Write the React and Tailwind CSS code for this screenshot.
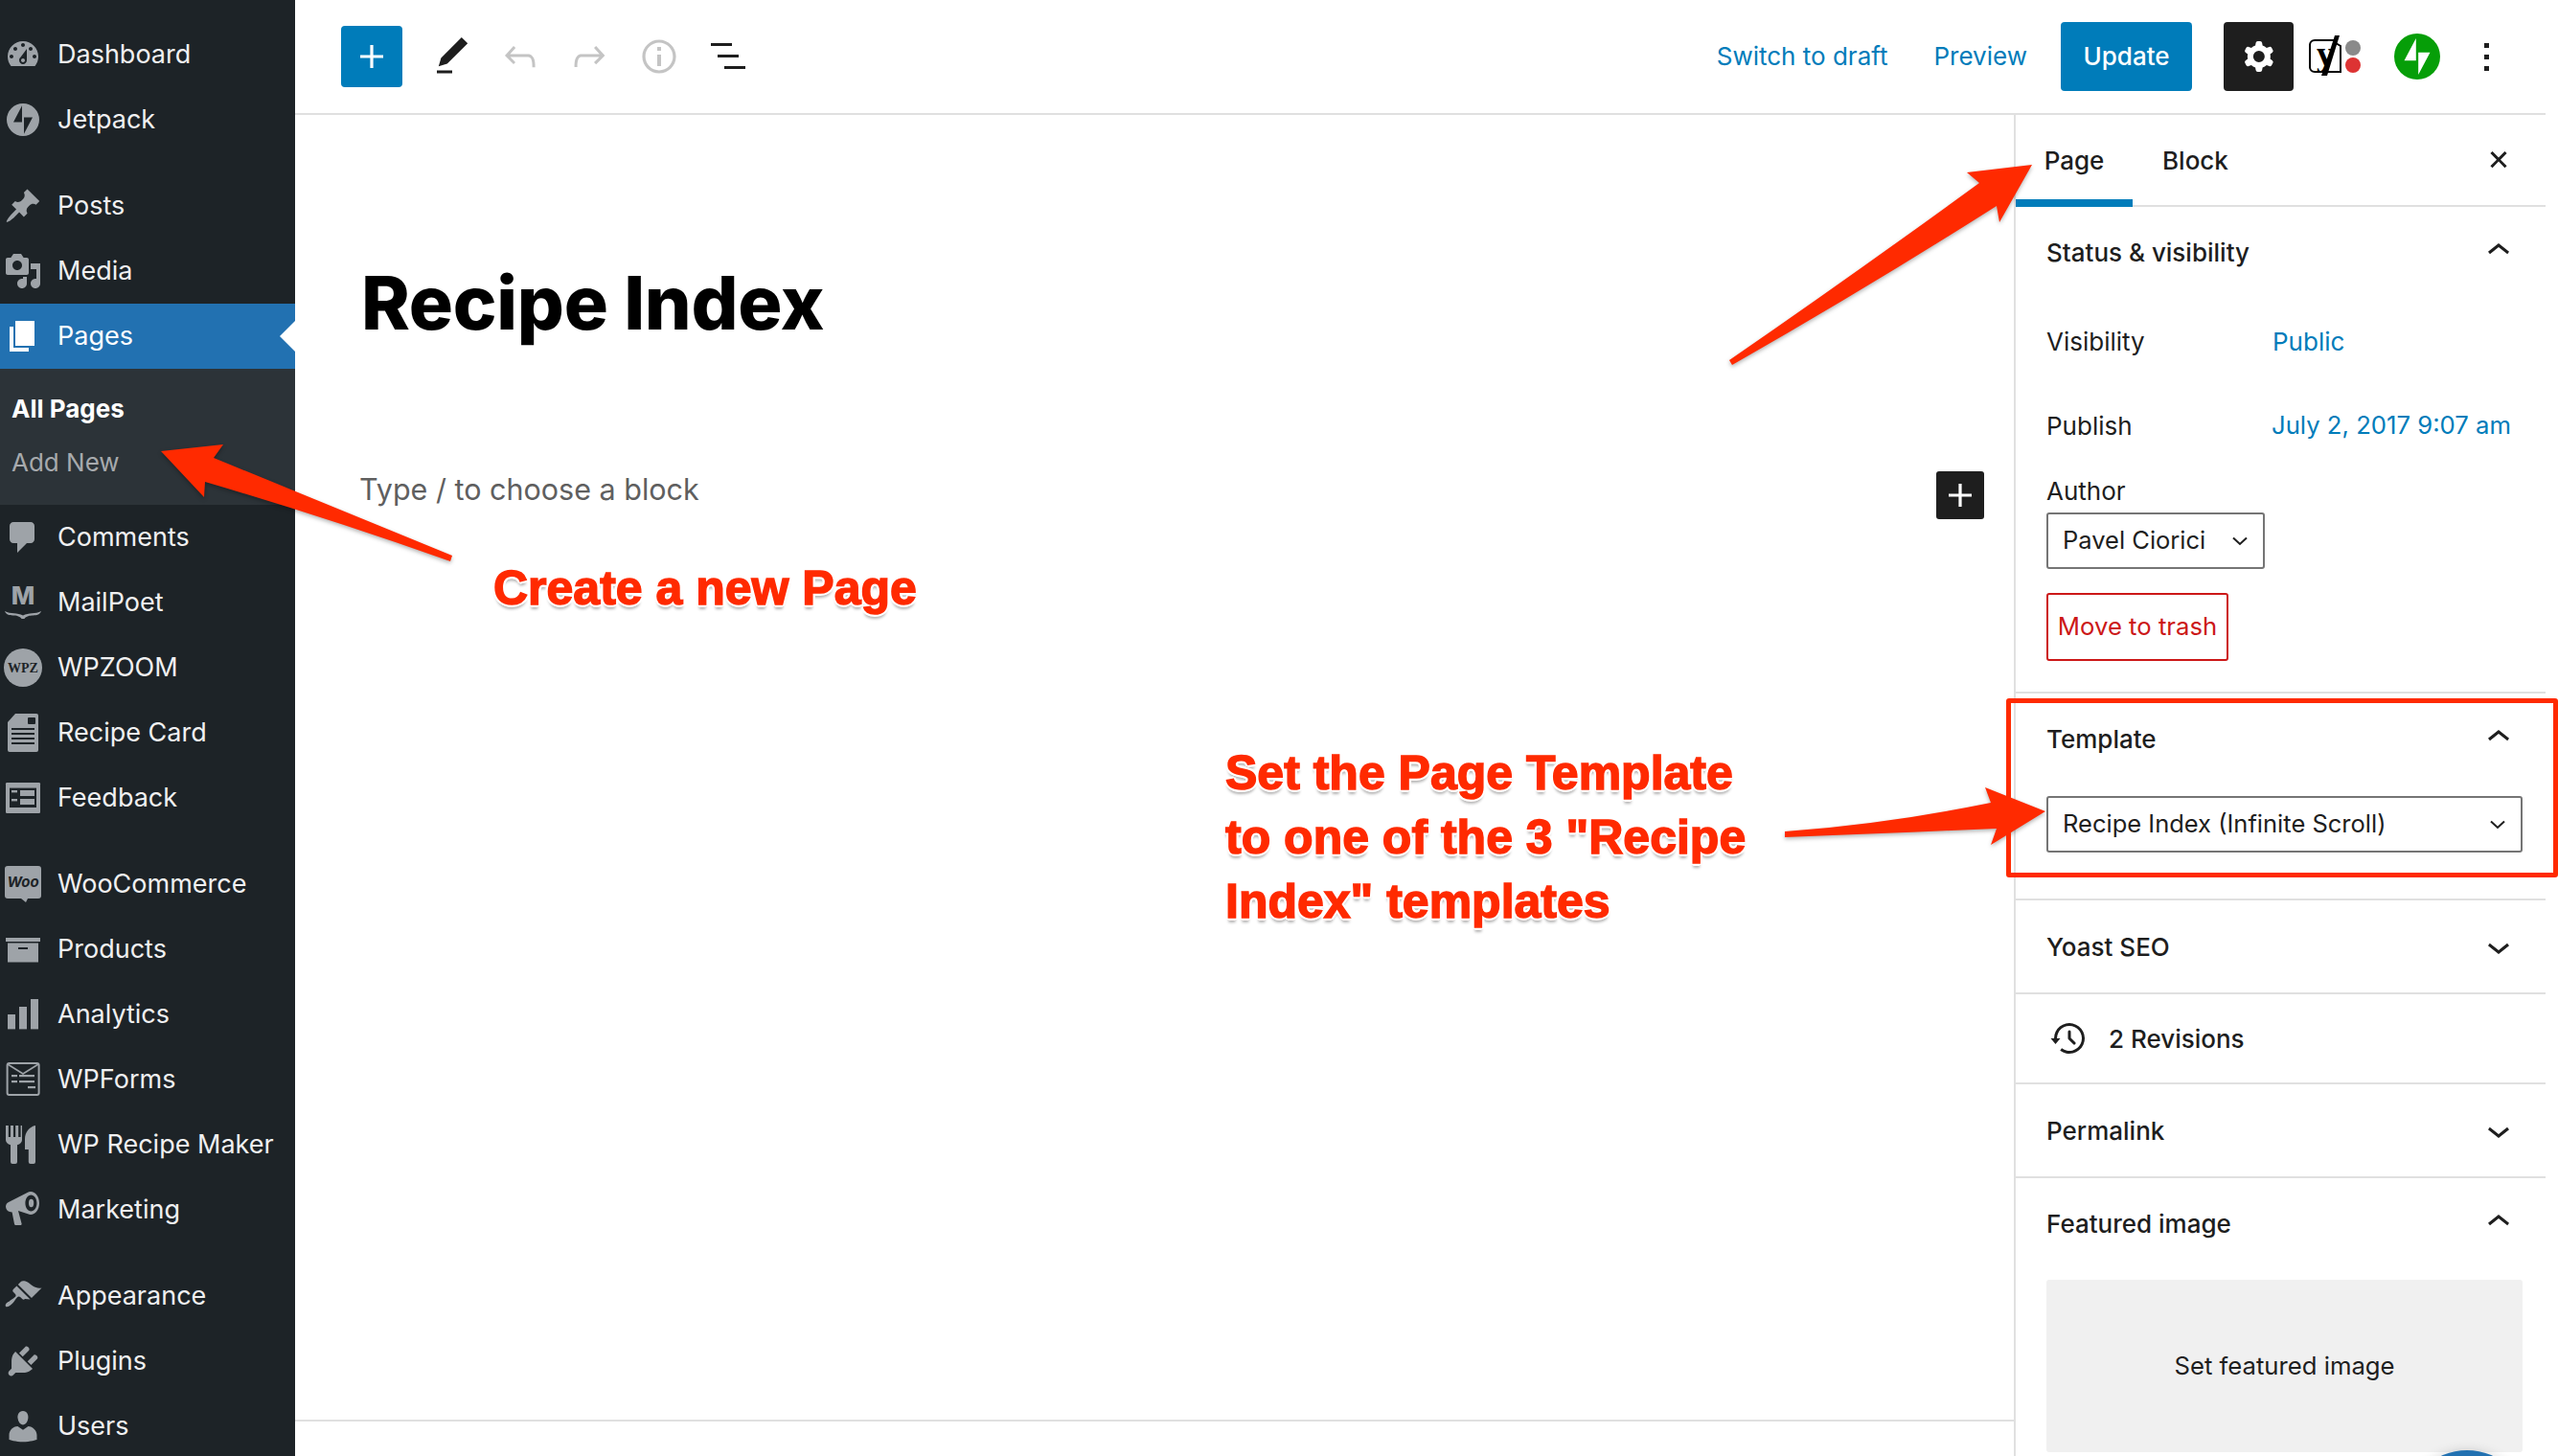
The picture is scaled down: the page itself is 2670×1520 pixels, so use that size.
import React from 'react';

const dash = {
  dashboard: 'M3.76 16h12.48c1.1-1.37 1.76-3.11 1.76-5 0-4.42-3.58-8-8-8s-8 3.58-8 8c0 1.89.66 3.63 1.76 5zM10 4c.55 0 1 .45 1 1s-.45 1-1 1-1-.45-1-1 .45-1 1-1zM6 6c.55 0 1 .45 1 1s-.45 1-1 1-1-.45-1-1 .45-1 1-1zm8 0c.55 0 1 .45 1 1s-.45 1-1 1-1-.45-1-1 .45-1 1-1zm-5.37 5.55L12 7v6c0 1.1-.9 2-2 2s-2-.9-2-2c0-.57.24-1.08.63-1.45zM4 10c.55 0 1 .45 1 1s-.45 1-1 1-1-.45-1-1 .45-1 1-1zm12 0c.55 0 1 .45 1 1s-.45 1-1 1-1-.45-1-1 .45-1 1-1zm-5 3c0-.55-.45-1-1-1s-1 .45-1 1 .45 1 1 1 1-.45 1-1z',
  jetpack: 'M10 1.5a8.5 8.5 0 100 17 8.5 8.5 0 000-17zM9.5 11.2H5L9.5 2.6zM10.5 17.4V8.8H15z',
  post: 'M10.44 3.02l1.82-1.82 6.36 6.35-1.83 1.82c-1.05-.68-2.48-.57-3.41.36l-.75.75c-.92.93-1.04 2.35-.35 3.41l-1.83 1.82-2.41-2.41-2.8 2.79c-.42.42-3.38 2.71-3.8 2.29s1.86-3.39 2.28-3.81l2.79-2.79L4.1 9.36l1.83-1.82c1.05.69 2.48.57 3.4-.36l.75-.75c.93-.92 1.05-2.35.36-3.41z',
  media: 'M13 11V4c0-.55-.45-1-1-1h-1.67L9 1H5L3.67 3H2c-.55 0-1 .45-1 1v7c0 .55.45 1 1 1h10c.55 0 1-.45 1-1zM7 4.5c1.38 0 2.5 1.12 2.5 2.5S8.38 9.5 7 9.5 4.5 8.38 4.5 7 5.62 4.5 7 4.5zM14 6h5v10.5c0 1.38-1.12 2.5-2.5 2.5S14 17.88 14 16.5s1.12-2.5 2.5-2.5c.17 0 .34.02.5.05V9h-3V6zm-4 8.05V13h2v3.5c0 1.38-1.12 2.5-2.5 2.5S7 17.88 7 16.5 8.12 14 9.5 14c.17 0 .34.02.5.05z',
  page: 'M6 15V2h10v13H6zm-1 1h8v2H3V5h2v11z',
  comments: 'M5 2h9c1.1 0 2 .9 2 2v7c0 1.1-.9 2-2 2h-2l-5 5v-5H5c-1.1 0-2-.9-2-2V4c0-1.1.9-2 2-2z',
  appearance: 'M14.48 11.06L7.41 3.99l1.5-1.5c.5-.56 2.3-.47 3.51.32 1.21.8 1.43 1.28 2.91 2.1 1.18.64 2.45 1.26 4.45.85zm-.71.71L6.7 4.7 4.93 6.47c-.39.39-.39 1.02 0 1.41l1.06 1.06c.39.39.39 1.03 0 1.42-.6.6-1.43 1.11-2.21 1.69-.35.26-.7.53-1.01.84C1.43 13.23.4 14.79 1.05 15.44c.65.65 2.21-.38 3.55-1.72.31-.31.58-.66.84-1.01.58-.78 1.09-1.61 1.69-2.21.39-.39 1.02-.39 1.41 0l1.06 1.06c.39.39 1.02.39 1.41 0z',
  plugins: 'M13.11 4.36L9.87 7.6 8 5.73l3.24-3.24c.35-.34 1.05-.2 1.56.32.52.51.66 1.21.31 1.55zm-8 1.77l.91-1.12 9.01 9.01-1.19.84c-.71.71-2.63 1.16-3.82 1.16H6.14L4.9 17.26c-.59.59-1.54.59-2.12 0-.59-.58-.59-1.53 0-2.12l1.24-1.24v-3.88c0-1.13.4-3.19 1.09-3.89zm7.26 3.97l3.24-3.24c.34-.35 1.04-.21 1.55.31.52.51.66 1.21.31 1.55l-3.24 3.25z',
  users: 'M10 9.25c-2.27 0-2.73-3.44-2.73-3.44C7 4.02 7.82 2 9.97 2c2.16 0 2.98 2.02 2.71 3.81 0 0-.41 3.44-2.68 3.44zm0 2.57L12.72 10c2.39 0 4.52 2.33 4.52 4.53v2.49s-3.65 1.13-7.24 1.13c-3.65 0-7.24-1.13-7.24-1.13v-2.49c0-2.25 1.94-4.48 4.47-4.48z',
};

const Dash = ({ d }) => <path fillRule="evenodd" d={d} />;

// logos that have no dashicon
const customIcons = {
  mailpoet: (
    <>
      <text x="10" y="11" textAnchor="middle" fontFamily="Inter, sans-serif" fontWeight="800" fontSize="13">M</text>
      <path d="M.5 14.5c3 1.6 6.5.8 9.5 2.2 3-1.4 6.5-.6 9.5-2.2-.6 1.7-2.2 2.2-4.2 2.2-1.8 0-3.6.3-4.6 1.8h-1.4c-1-1.5-2.8-1.8-4.6-1.8-2 0-3.6-.5-4.2-2.2z" />
    </>
  ),
  wpz: (
    <>
      <circle cx="10" cy="10" r="10" />
      <text x="10" y="12.3" textAnchor="middle" fontFamily="Liberation Serif, serif" fontWeight="700" fontSize="7" fill="#1d2327">WPZ</text>
    </>
  ),
  recipe: (
    <>
      <path d="M6 0h11a1 1 0 011 1v18a1 1 0 01-1 1H3a1 1 0 01-1-1V4.5z" />
      <rect x="12.5" y="2" width="4" height="3.5" rx=".5" fill="#1d2327" />
      <rect x="4" y="7.5" width="12" height="1" fill="#1d2327" />
      <rect x="4" y="10" width="12" height="1" fill="#1d2327" />
      <rect x="4" y="12.5" width="12" height="1" fill="#1d2327" />
      <rect x="4" y="15" width="12" height="1" fill="#1d2327" />
    </>
  ),
  feedback: (
    <>
      <rect x="1" y="2" width="18" height="16" rx=".6" />
      <rect x="3" y="4.8" width="14" height="10.2" fill="#1d2327" />
      <rect x="4" y="6" width="3" height="1.2" />
      <rect x="4" y="10.5" width="3" height="1.2" />
      <rect x="8.5" y="6" width="7.5" height="3" />
      <rect x="8.5" y="10.5" width="7.5" height="3" />
    </>
  ),
  woo: (
    <>
      <path d="M2 .5h16A1.5 1.5 0 0119.5 2v14a1.5 1.5 0 01-1.5 1.5h-5.5l-1 2-2.5-2H2A1.5 1.5 0 01.5 16V2A1.5 1.5 0 012 .5z" />
      <text x="10" y="11.5" textAnchor="middle" fontFamily="Inter, sans-serif" fontStyle="italic" fontWeight="700" fontSize="7.5" fill="#1d2327">Woo</text>
    </>
  ),
  products: (
    <>
      <rect x="1" y="4" width="18" height="2" />
      <path d="M2 6.8h16v10H2zM7.5 9v1h5V9z" fillRule="evenodd" />
    </>
  ),
  analytics: (
    <>
      <rect x="2" y="10" width="4" height="7.7" />
      <rect x="8" y="6" width="4" height="11.7" />
      <rect x="14" y="2" width="4" height="15.7" />
    </>
  ),
  wpforms: (
    <>
      <rect x="1.8" y="1.5" width="16.5" height="16.5" rx="1" fill="none" stroke="currentColor" strokeWidth="1" />
      <path d="M2 2l8 5 8-5" fill="none" stroke="currentColor" strokeWidth=".8" />
      <rect x="4" y="7.5" width="3" height="1.1" />
      <rect x="8" y="7.5" width="8" height="1.1" />
      <rect x="4" y="10.5" width="3" height="1.1" />
      <rect x="8" y="10.5" width="8" height="1.1" />
      <rect x="12.5" y="13.5" width="4" height="1.1" />
    </>
  ),
  wprm: (
    <>
      <path d="M1 0h1.4v6h1.1V0H5v6h1.1V0h1.5v6h1.2V0h.7v7.5c0 1.3-1 2.3-2.500 2.600V19a1 1 0 01-1 1H4.500a1 1 0 01-1-1v-8.900C2 9.800 1 8.800 1 7.500z" />
      <path d="M16.500 0v19a1 1 0 01-1 1h-1.600a1 1 0 01-1-1v-6.500H11V7c0-3.500 2.500-6.500 5.500-7z" />
    </>
  ),
  marketing: (
    <>
      <path fillRule="evenodd" d="M14 .5c2.500 0 4.500 2.700 4.500 6s-2 6-4.500 6c-.5 0-1-.1-1.500-.4L7.500 10.500l1.800 6.700c.1.500-.2.800-.7.800H6.300c-.4 0-.7-.2-.8-.6L4.300 11.300 3 11c-1.200-.3-2-1.400-2-2.700 0-1 .6-1.900 1.500-2.300L12.300 1c.5-.3 1.100-.5 1.700-.5zm.2 1.800c-1.700 0-3 1.900-3 4.200s1.300 4.200 3 4.200 3-1.900 3-4.200-1.300-4.200-3-4.200z" />
      <ellipse cx="14.300" cy="6.500" rx="1.300" ry="2.100" />
    </>
  ),
};

const menuGroups = [
  [
    { label: 'Dashboard', icon: <Dash d={dash.dashboard} /> },
    { label: 'Jetpack', icon: <Dash d={dash.jetpack} /> },
  ],
  [
    { label: 'Posts', icon: <Dash d={dash.post} /> },
    { label: 'Media', icon: <Dash d={dash.media} /> },
    { label: 'Pages', icon: <Dash d={dash.page} />, active: true },
    { label: 'Comments', icon: <Dash d={dash.comments} /> },
    { label: 'MailPoet', icon: customIcons.mailpoet },
    { label: 'WPZOOM', icon: customIcons.wpz },
    { label: 'Recipe Card', icon: customIcons.recipe },
    { label: 'Feedback', icon: customIcons.feedback },
  ],
  [
    { label: 'WooCommerce', icon: customIcons.woo },
    { label: 'Products', icon: customIcons.products },
    { label: 'Analytics', icon: customIcons.analytics },
    { label: 'WPForms', icon: customIcons.wpforms },
    { label: 'WP Recipe Maker', icon: customIcons.wprm },
    { label: 'Marketing', icon: customIcons.marketing },
  ],
  [
    { label: 'Appearance', icon: <Dash d={dash.appearance} /> },
    { label: 'Plugins', icon: <Dash d={dash.plugins} /> },
    { label: 'Users', icon: <Dash d={dash.users} /> },
  ],
];

function MenuItem({ item }) {
  return (
    <>
      <div className={`relative flex h-[68px] items-center gap-4 pl-[4px] text-[27px] ${item.active ? 'bg-[#2271b1] text-white' : 'text-[#f0f0f1]'}`}>
        <svg viewBox="0 0 20 20" fill="currentColor" className={`h-10 w-10 shrink-0 overflow-visible ${item.active ? 'text-white' : 'text-[#9ea3a8]'}`}>
          {item.icon}
        </svg>
        <span>{item.label}</span>
        {item.active && (
          <span className="absolute right-0 top-1/2 h-0 w-0 -translate-y-1/2 border-y-[16px] border-r-[16px] border-y-transparent border-r-white" />
        )}
      </div>
      {item.active && (
        <div className="flex h-[142px] flex-col bg-[#2c3338] pl-[12px] pt-[13px] text-[26px]">
          <div className="flex h-[56px] items-center font-bold text-white">All Pages</div>
          <div className="flex h-[56px] items-center text-[#a7aaad]">Add New</div>
        </div>
      )}
    </>
  );
}

function Sidebar() {
  return (
    <aside className="flex h-full w-[308px] shrink-0 flex-col gap-[22px] overflow-hidden bg-[#1d2327] pt-[23px]">
      {menuGroups.map((group, i) => (
        <div key={i}>
          {group.map((item) => (
            <MenuItem key={item.label} item={item} />
          ))}
        </div>
      ))}
    </aside>
  );
}

function WpIcon({ d, className = '' }) {
  return (
    <svg viewBox="0 0 24 24" fill="currentColor" className={`h-12 w-12 shrink-0 ${className}`}>
      <path fillRule="evenodd" d={d} />
    </svg>
  );
}

const icons = {
  plus: 'M18 11.2h-5.2V6h-1.6v5.2H6v1.6h5.2V18h1.6v-5.2H18z',
  pencil: 'M20.1 5.1L16.9 2 6.2 12.7l-1.3 4.4 4.5-1.3L20.1 5.1zM4 20.8h8v-1.5H4v1.5z',
  undo: 'M18.3 11.7c-.6-.6-1.4-.9-2.3-.9H6.7l2.9-3.3-1.1-1-4.5 5L8.5 16l1-1-2.7-2.7H16c.5 0 .9.2 1.3.5 1 1 1 3.4 1 4.5v.3h1.5v-.2c0-1.5 0-4.3-1.5-5.7z',
  redo: 'M15.6 6.5l-1.1 1 2.9 3.3H8c-.9 0-1.7.3-2.3.9-1.4 1.5-1.4 4.2-1.4 5.6v.2h1.5v-.3c0-1.1 0-3.5 1-4.5.3-.3.7-.5 1.3-.5h9.2L14.5 15l1.1 1.1 4.6-4.6-4.6-5z',
  info: 'M12 3.2c-4.8 0-8.8 3.9-8.8 8.8 0 4.8 3.9 8.8 8.8 8.8 4.8 0 8.8-3.9 8.8-8.8 0-4.8-4-8.8-8.8-8.8zm0 16c-4 0-7.2-3.3-7.2-7.2C4.8 8 8 4.8 12 4.8s7.2 3.3 7.2 7.2c0 4-3.2 7.2-7.2 7.2zM11 17h2v-6h-2v6zm0-8h2V7h-2v2z',
  cog: 'M10.289 4.836A1 1 0 0111.275 4h1.306a1 1 0 01.987.836l.244 1.466c.787.26 1.503.679 2.108 1.218l1.393-.522a1 1 0 011.216.437l.653 1.13a1 1 0 01-.23 1.273l-1.148.944a6.025 6.025 0 010 2.435l1.149.946a1 1 0 01.23 1.272l-.653 1.13a1 1 0 01-1.216.437l-1.394-.522c-.605.54-1.32.958-2.108 1.218l-.244 1.466a1 1 0 01-.987.836h-1.306a1 1 0 01-.986-.836l-.244-1.466a5.995 5.995 0 01-2.108-1.218l-1.394.522a1 1 0 01-1.217-.436l-.653-1.131a1 1 0 01.23-1.272l1.149-.946a6.026 6.026 0 010-2.435l-1.148-.944a1 1 0 01-.23-1.272l.653-1.131a1 1 0 011.217-.437l1.393.522a5.994 5.994 0 012.108-1.218l.244-1.466zM14.929 12a3 3 0 11-6 0 3 3 0 016 0z',
  close: 'M13 11.9l3.3-3.4-1.1-1-3.2 3.3-3.2-3.3-1.1 1 3.3 3.4-3.3 3.2 1.1 1 3.2-3.3 3.2 3.3 1.1-1-3.3-3.2z',
  up: 'M6.5 12.4L12 8l5.5 4.4-.9 1.2L12 10l-4.5 3.6-1-1.2z',
  down: 'M17.5 11.6L12 16l-5.5-4.4.9-1.2L12 14l4.5-3.6 1 1.2z',
  history: 'M5.5 12h1.75l-2.5 3-2.5-3H4a8 8 0 113.134 6.35l.907-1.194A6.5 6.5 0 105.5 12zm9.53 1.97l-2.28-2.28V8.5a.75.75 0 00-1.5 0V12c0 .199.079.39.22.53l2.5 2.5a.75.75 0 101.06-1.06z',
};

function TopBar() {
  return (
    <header className="flex h-[120px] shrink-0 items-center border-b-2 border-[#e0e0e0] pl-[48px] pr-[59px]">
      <button className="flex h-16 w-16 items-center justify-center rounded-[4px] bg-[#007cba] text-white">
        <WpIcon d={icons.plus} />
      </button>
      <WpIcon d={icons.pencil} className="ml-[28px] text-[#1e1e1e]" />
      <WpIcon d={icons.undo} className="ml-[23px] text-[#c4c4c4]" />
      <WpIcon d={icons.redo} className="ml-[24px] text-[#c4c4c4]" />
      <WpIcon d={icons.info} className="ml-[25px] text-[#c4c4c4]" />
      <svg viewBox="0 0 36 28" fill="#1e1e1e" className="ml-[30px] h-[28px] w-[36px]">
        <rect x="0" y="0" width="22" height="3" />
        <rect x="7" y="12" width="22" height="3" />
        <rect x="14" y="24" width="22" height="3" />
      </svg>

      <div className="-mt-[2px] ml-auto flex items-center text-[26px] text-[#007cba]">
        <span>Switch to draft</span>
        <span className="ml-[48px]">Preview</span>
      </div>
      <button className="ml-[35px] flex h-[72px] w-[137px] items-center justify-center rounded-[4px] bg-[#007cba] pb-[2px] text-[26px] font-medium text-white">
        Update
      </button>
      <button className="ml-[33px] flex h-[72px] w-[73px] items-center justify-center rounded-[4px] bg-[#1e1e1e] text-white">
        <WpIcon d={icons.cog} />
      </button>
      <svg viewBox="0 0 60 48" className="ml-[14px] h-[48px] w-[60px] shrink-0 overflow-visible">
        <path d="M8 7h22M8 7a5 5 0 00-5 5v23a5 5 0 005 5h9M30 10l5 3v27H22" fill="none" stroke="#000" strokeWidth="2" />
        <text x="19" y="33" textAnchor="middle" fontFamily="Liberation Serif, serif" fontWeight="700" fontSize="36" fill="#000">y</text>
        <path d="M29 2h5L21 44h-6l4-11z" fill="#000" />
        <circle cx="48" cy="15" r="8" fill="#8a8a8a" />
        <circle cx="48" cy="33" r="8" fill="#dd3333" />
      </svg>
      <svg viewBox="0 0 48 48" className="ml-[31px] h-[48px] w-[48px] shrink-0">
        <circle cx="24" cy="24" r="24" fill="#069e08" />
        <path d="M22.8 5v23.3H10.5zM25.2 43V19.7h12.3z" fill="#fff" />
      </svg>
      <svg viewBox="0 0 5 29" fill="#1e1e1e" className="ml-[46px] h-[29px] w-[5px] shrink-0">
        <rect x="0" y="0" width="5" height="5" />
        <rect x="0" y="12" width="5" height="5" />
        <rect x="0" y="24" width="5" height="5" />
      </svg>
    </header>
  );
}

function PanelHeader({ title, open }) {
  return (
    <div className="flex h-[96px] shrink-0 items-center justify-between pl-[32px] pr-[25px] text-[#1e1e1e]">
      <span className={`text-[26px] font-medium ${open ? '-mt-[1px]' : ''}`}>{title}</span>
      <WpIcon d={open ? icons.up : icons.down} className={open ? '-mt-[4px]' : ''} />
    </div>
  );
}

function SelectBox({ label, className = '' }) {
  return (
    <div className={`flex h-[59px] items-center justify-between rounded-[3px] border-2 border-[#757575] pl-[15px] pr-[16px] text-[25.5px] text-[#1e1e1e] ${className}`}>
      <span>{label}</span>
      <svg viewBox="0 0 16 10" fill="none" stroke="#1e1e1e" strokeWidth="2" className="h-[10px] w-[16px]">
        <path d="M1 1.5l7 6.5 7-6.500" />
      </svg>
    </div>
  );
}

function Panel() {
  return (
    <aside className="flex w-[555px] shrink-0 flex-col overflow-hidden border-l-2 border-[#e0e0e0] text-[26px] text-[#1e1e1e]">
      {/* tabs */}
      <div className="flex h-[96px] shrink-0 items-center border-b-2 border-[#e0e0e0] pr-[25px]">
        <div className="relative flex h-[94px] w-[122px] items-center justify-center font-medium">
          Page
          <span className="absolute -bottom-[2px] left-0 right-0 h-[8px] bg-[#007cba]" />
        </div>
        <div className="ml-[31px] font-medium">Block</div>
        <WpIcon d={icons.close} className="ml-auto" />
      </div>

      {/* status */}
      <section className="h-[508px] shrink-0 border-b-2 border-[#e0e0e0]">
        <PanelHeader title="Status & visibility" open />
        <div className="px-[32px]">
          <div className="flex h-[88px] items-center">
            <span className="w-[236px]">Visibility</span>
            <span className="text-[#007cba]">Public</span>
          </div>
          <div className="flex h-[88px] items-center">
            <span className="w-[235px]">Publish</span>
            <span className="text-[25.7px] text-[#007cba]">July 2, 2017 9:07 am</span>
          </div>
          <div className="mt-[3px] leading-[44px]">Author</div>
          <SelectBox label="Pavel Ciorici" className="w-[228px]" />
          <button className="mt-[25px] flex h-[71px] w-[190px] items-center justify-center rounded-[3px] border-2 border-[#cc1818] text-[25.7px] text-[#cc1818]">
            Move to trash
          </button>
        </div>
      </section>

      {/* template */}
      <section className="h-[216px] shrink-0 border-b-2 border-[#e0e0e0]">
        <PanelHeader title="Template" open />
        <div className="mt-[11px] pl-[32px] pr-[24px]">
          <SelectBox label="Recipe Index (Infinite Scroll)" />
        </div>
      </section>

      <section className="shrink-0 border-b-2 border-[#e0e0e0]">
        <PanelHeader title="Yoast SEO" />
      </section>

      <section className="flex h-[94px] shrink-0 items-center gap-[17px] border-b-2 border-[#e0e0e0] pl-[32px] font-medium">
        <WpIcon d={icons.history} />
        <span>2 Revisions</span>
      </section>

      <section className="shrink-0 border-b-2 border-[#e0e0e0]">
        <PanelHeader title="Permalink" />
      </section>

      <section className="shrink-0">
        <PanelHeader title="Featured image" open />
        <div className="mb-4 ml-[32px] mr-[24px] mt-[10px] flex h-[180px] items-center justify-center rounded-[3px] bg-[#f0f0f0] text-[25.7px]">
          Set featured image
        </div>
      </section>
    </aside>
  );
}

function Editor() {
  return (
    <main className="flex min-w-0 flex-1 flex-col">
      <div className="flex-1 pl-[67px] pr-[31px] pt-[147px]">
        <h1 className="pl-[2px] text-[77px] font-extrabold leading-[98px] tracking-[-0.3px] text-black">Recipe Index</h1>
        <div className="mt-[122px] flex items-start justify-between">
          <span className="-mt-[1px] text-[30.5px] leading-[50px] text-[#5f5f5f]">Type / to choose a block</span>
          <button className="mt-[5px] flex h-[50px] w-[50px] items-center justify-center rounded-[3px] bg-[#1e1e1e] text-white">
            <WpIcon d={icons.plus} />
          </button>
        </div>
      </div>
      <div className="h-[38px] shrink-0 border-t-2 border-[#e0e0e0]" />
    </main>
  );
}

// annotation layer painted on top of the screenshot
function Note({ children, className = '' }) {
  return (
    <div className={`absolute whitespace-nowrap font-['Liberation_Sans',Arial,sans-serif] text-[50px] font-bold leading-[67px] text-[#ff2a00] [-webkit-text-stroke:1.5px_#ff2a00] [text-shadow:3px_0_0_#fff,-3px_0_0_#fff,0_3px_0_#fff,0_-3px_0_#fff,2px_2px_0_#fff,-2px_2px_0_#fff,2px_-2px_0_#fff,-2px_-2px_0_#fff,0_5px_3px_rgba(0,0,0,0.3)] ${className}`}>
      {children}
    </div>
  );
}

function Annotations() {
  return (
    <>
      <svg viewBox="0 0 2670 1520" className="pointer-events-none absolute inset-0 h-[1520px] w-[2670px] drop-shadow-[0_2px_2px_rgba(0,0,0,0.3)]">
        <g fill="#ff2a00">
          <path d="M168 471L233 464 223 478Q350 530 472 580L470 586Q340 540 214 503L213 519z" />
          <path d="M2121 172L2053 180 2066 191Q1930 290 1805 376L1808 381Q1950 300 2084 215L2087 232z" />
          <path d="M2135 847L2072 822 2078 838Q1970 860 1863 868L1863 874Q1970 870 2084 865L2078 882z" />
        </g>
      </svg>
      <Note className="left-[515px] top-[581px]">Create a new Page</Note>
      <Note className="left-[1279px] top-[774px]">
        Set the Page Template
        <br />
        to one of the 3 "Recipe
        <br />
        Index" templates
      </Note>
      <div className="absolute left-[2094px] top-[729px] h-[187px] w-[576px] rounded-[3px] border-[5px] border-[#ff2a00]" />
      {/* help beacon, cut by the bottom of the window */}
      <div className="absolute left-[2511px] top-[1514px] h-[128px] w-[128px] rounded-full bg-[#2271b1] shadow-[0_0_12px_rgba(0,0,0,0.15)]" />
    </>
  );
}

export default function App() {
  return (
    <div className="relative flex h-[1520px] w-[2670px] overflow-hidden bg-white font-['Inter',sans-serif]">
      <Sidebar />
      <div className="flex min-w-0 flex-1 flex-col pr-[13px]">
        <TopBar />
        <div className="flex min-h-0 flex-1">
          <Editor />
          <Panel />
        </div>
      </div>
      <Annotations />
    </div>
  );
}
